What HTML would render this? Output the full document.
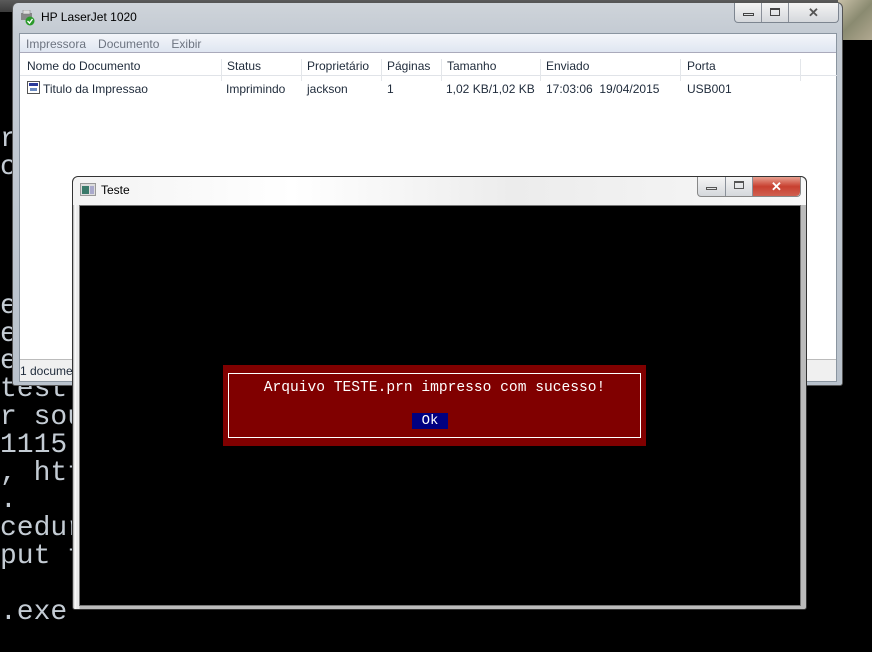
<!DOCTYPE html>
<html><head><meta charset="utf-8"><style>
*{margin:0;padding:0;box-sizing:border-box}
body{width:872px;height:652px;background:#000;position:relative;overflow:hidden;font-family:"Liberation Sans",sans-serif}
.con{position:absolute;left:0;top:126px;font-family:"Liberation Mono",monospace;font-size:28px;line-height:27.8px;color:#c4ccd4;white-space:pre;letter-spacing:0px}
.topstrip{position:absolute;left:0;top:0;width:872px;height:12px;background:linear-gradient(#5a5a5a,#3a3a3a)}
.photo{position:absolute;left:838px;top:0;width:34px;height:40px;background:linear-gradient(135deg,#c8c0a8,#8a8a70 50%,#b0a890)}
.pw{position:absolute;left:12px;top:2px;width:831px;height:384px;border:1px solid #555;border-radius:6px 6px 3px 3px;background:linear-gradient(180deg,#cfd4da 0,#c4cbd3 30px,#b9c2cc 100%)}
.pw .t{position:absolute;left:28px;top:7px;font-size:12px;color:#000}
.client{position:absolute;left:6px;top:30px;width:818px;height:349px;background:#fff;border:1px solid #8a95a0}
.menu{height:19px;background:linear-gradient(#f4f6fa,#dfe6f1);font-size:12px;color:#6d7480;padding:3px 0 0 6px;border-bottom:1px solid #aab}
.menu span{margin-right:12px}
.hdr{position:absolute;top:20px;left:0;width:817px;height:22px;border-bottom:1px solid #e0e3e8;font-size:12px;color:#1e2a3a}
.hdr div,.row div{position:absolute;top:5px}
.row{position:absolute;top:43px;left:0;font-size:12px;color:#1e2a3a}
.sep{position:absolute;top:0;width:1px;height:22px;background:#e3e6ea}
.status{position:absolute;left:0;bottom:0;width:816px;height:22px;background:#f0f0f0;border-top:1px solid #bbb;font-size:12px;color:#1e2a3a;padding:4px 0 0 0}
.btns{position:absolute;top:0;height:20px;border:1px solid #7d8590;border-top:none;border-radius:0 0 4px 4px;background:linear-gradient(#f4f4f4,#d5d8dc);display:flex}
.btns div{border-right:1px solid #8a9099;position:relative}
.tw{position:absolute;left:72px;top:176px;width:735px;height:434px;border:1px solid #333;border-radius:6px 6px 3px 3px;background:linear-gradient(90deg,#aaa,#fff 2px,#e8e8e8 4px,#eee 6px,#bbb 7px)}
.tw .tb{position:absolute;left:0;top:0;width:733px;height:28px;background:linear-gradient(90deg,#f3f3f3,#fff 30%,#ececec 60%,#f8f8f8);border-radius:6px 6px 0 0}
.tw .blk{position:absolute;left:6px;top:28px;width:722px;height:401px;background:#000;border:1px solid #777}
.dlg{position:absolute;left:223px;top:365px;width:423px;height:81px;background:#800000}
.dlg .in{position:absolute;left:5px;top:8px;width:413px;height:65px;border:1px solid #fff}
.dlg .msg{position:absolute;left:0;width:100%;top:15px;text-align:center;font-family:"Liberation Mono",monospace;font-size:14.6px;color:#fff}
.ok{position:absolute;left:189px;top:48px;width:36px;height:16px;background:#000080;color:#fff;font-family:"Liberation Mono",monospace;font-size:14px;text-align:center;line-height:16px}
</style></head><body>
<div class="topstrip"></div>
<div class="photo"></div>
<div class="con">r
c




e
e
e
test
r source
1115
, http
.
cedure
put t

.exe</div>

<div class="pw">
 <svg style="position:absolute;left:6px;top:7px" width="16" height="16"><rect x="2" y="3" width="11" height="7" fill="#888"/><rect x="4" y="0" width="7" height="4" fill="#ddd" stroke="#777" stroke-width=".5"/><circle cx="11" cy="11" r="4.5" fill="#2a9a2a"/><path d="M8.5 11l2 2 3-4" stroke="#fff" stroke-width="1.4" fill="none"/></svg>
 <div class="t">HP LaserJet 1020</div>
 <div class="btns" style="left:721px;width:105px">
  <div style="width:27px"><span style="position:absolute;left:8px;top:10px;width:11px;height:3px;border:1px solid #444"></span></div>
  <div style="width:27px"><span style="position:absolute;left:8px;top:5px;width:10px;height:8px;border:1px solid #444;border-top-width:2px"></span></div>
  <div style="flex:1;border:none;text-align:center;font-size:13px;font-weight:bold;color:#555;line-height:19px">✕</div>
 </div>
 <div class="client">
  <div class="menu"><span>Impressora</span><span>Documento</span><span>Exibir</span></div>
  <div class="hdr">
   <div style="left:7px">Nome do Documento</div>
   <div class="sep" style="left:201px"></div><div style="left:207px">Status</div>
   <div class="sep" style="left:281px"></div><div style="left:287px">Proprietário</div>
   <div class="sep" style="left:361px"></div><div style="left:367px">Páginas</div>
   <div class="sep" style="left:421px"></div><div style="left:427px">Tamanho</div>
   <div class="sep" style="left:520px"></div><div style="left:526px">Enviado</div>
   <div class="sep" style="left:660px"></div><div style="left:667px">Porta</div>
   <div class="sep" style="left:780px"></div>
  </div>
  <div class="row">
   <svg style="position:absolute;left:7px;top:4px" width="13" height="13"><rect x=".5" y=".5" width="12" height="12" fill="#fff" stroke="#555"/><rect x="2" y="2" width="9" height="3" fill="#2a3a9a"/><rect x="3" y="7" width="7" height="3" fill="#6a8ac0"/></svg>
   <div style="left:23px;width:160px">Titulo da Impressao</div>
   <div style="left:206px;width:80px">Imprimindo</div>
   <div style="left:287px">jackson</div>
   <div style="left:367px">1</div>
   <div style="left:426px;width:100px">1,02 KB/1,02 KB</div>
   <div style="left:526px;width:120px">17:03:06&nbsp; 19/04/2015</div>
   <div style="left:667px">USB001</div>
  </div>
  <div class="status">1 documento(s) na fila</div>
 </div>
</div>

<div class="tw">
 <div class="tb"></div>
 <svg style="position:absolute;left:7px;top:6px" width="16" height="14"><rect x=".5" y=".5" width="15" height="12" fill="#ddd" stroke="#999"/><rect x="2" y="3" width="7" height="8" fill="#3a7a6a"/><rect x="10" y="3" width="4" height="8" fill="#aac"/></svg>
 <div style="position:absolute;left:28px;top:6px;font-size:12px;color:#000">Teste</div>
 <div class="btns" style="left:624px;width:104px;border-color:#888">
  <div style="width:28px"><span style="position:absolute;left:8px;top:10px;width:11px;height:3px;border:1px solid #555"></span></div>
  <div style="width:27px"><span style="position:absolute;left:8px;top:4px;width:10px;height:8px;border:1px solid #555;border-top-width:2px"></span></div>
  <div style="flex:1;border:none;background:linear-gradient(#e8a090,#c84030 50%,#d06050);text-align:center;font-size:13px;font-weight:bold;color:#fff;line-height:19px;border-radius:0 0 4px 0">✕</div>
 </div>
 <div class="blk"></div>
</div>

<div class="dlg"><div class="in"></div>
 <div class="msg">Arquivo TESTE.prn impresso com sucesso!</div>
 <div class="ok">Ok</div>
</div>
</body></html>
